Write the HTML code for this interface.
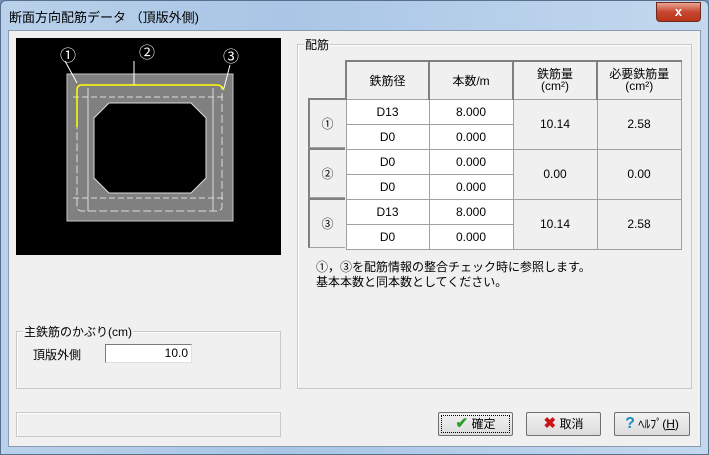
<!DOCTYPE html><html><head><meta charset="utf-8"><style>
*{margin:0;padding:0;box-sizing:border-box}
body{width:709px;height:455px;overflow:hidden;font-family:"Liberation Sans","Noto Sans CJK JP",sans-serif;font-size:12px;color:#000;background:#6d8fb8}
.win{position:absolute;left:0;top:0;width:709px;height:455px;border-radius:6px 6px 0 0;background:linear-gradient(90deg,#b9d1ea 0%,#a9c6e6 40%,#c3d8ee 100%);border:1px solid #5a6f8c}
.title{position:absolute;left:8px;top:6px;font-size:13px}
.close{position:absolute;left:655px;top:1px;width:45px;height:20px;border-radius:0 0 4px 4px;background:linear-gradient(#e8a493,#c7462f 50%,#b93519);border:1px solid #6e2a1e;color:#fff;font-weight:bold;text-align:center;line-height:18px;font-size:13px}
.client{position:absolute;left:8px;top:30px;width:693px;height:417px;background:#f0f0f0;border:1px solid #8a9bb0}
.abs{position:absolute}
.grp{position:absolute;border:1px solid #c8c8c8;box-shadow:1px 1px 0 #fff inset}
.lg{position:absolute;background:#f0f0f0;padding:0 1px;top:-9px;left:6px}
table{border-collapse:collapse;position:absolute;left:345px;top:60px}
td{border:1px solid #a0a0a0;text-align:center;font-size:12px}
.hd{background:#f0f0f0;border-left:2px solid #808080;border-top:2px solid #808080}
.btn{position:absolute;height:24px;border:1px solid #707070;border-radius:2px;background:linear-gradient(#f2f2f2,#dcdcdc);text-align:center;line-height:22px;font-size:12px}
</style></head><body><div class="win">
<div class="title">断面方向配筋データ （頂版外側)</div>
<div class="close">x</div>
</div>
<div class="client"></div>
<div class="abs" style="left:16px;top:38px;width:265px;height:217px;background:#000"></div>
<svg class="abs" style="left:16px;top:38px" width="265" height="217">
<rect x="51" y="36" width="166" height="147" fill="#808080" stroke="#c8c8c8"/>
<polygon points="93,65 175,65 190,80 190,140 175,155 93,155 78,140 78,80" fill="#000" stroke="#ddd"/>
<path d="M61,52 Q61,47 66,47 H201 Q206,47 206,52 V168 Q206,173 201,173 H66 Q61,173 61,168 Z" fill="none" stroke="#ddd" stroke-dasharray="8,3"/>
<line x1="57" y1="59" x2="210" y2="59" stroke="#ddd" stroke-dasharray="6,3"/>
<line x1="57" y1="160" x2="210" y2="160" stroke="#ddd" stroke-dasharray="6,3"/>
<line x1="72" y1="50" x2="72" y2="173" stroke="#ddd"/>
<line x1="197" y1="50" x2="197" y2="173" stroke="#ddd"/>
<path d="M61,89 V52 Q61,47 66,47 H201 Q206,47 208,52" fill="none" stroke="#ff0" stroke-width="1.5"/>
<line x1="61" y1="45" x2="49" y2="23" stroke="#fff"/><line x1="118" y1="47" x2="118" y2="23" stroke="#fff"/><line x1="208" y1="50" x2="214" y2="27" stroke="#fff"/>
<text x="44" y="23" fill="#fff" font-size="16">①</text><text x="123" y="20" fill="#fff" font-size="16">②</text><text x="207" y="24" fill="#fff" font-size="16">③</text>
</svg>
<div class="grp" style="left:297px;top:44px;width:395px;height:345px"><span class="lg">配筋</span></div>
<table>
<tr style="height:38px"><td class="hd" style="width:83px">鉄筋径</td><td class="hd" style="width:84px">本数/m</td><td class="hd" style="width:84px;line-height:12px">鉄筋量<br>(cm²)</td><td class="hd" style="width:84px;line-height:12px">必要鉄筋量<br>(cm²)</td></tr>
<tr style="height:25px"><td style="background:#fff">D13</td><td style="background:#fff">8.000</td><td rowspan="2">10.14</td><td rowspan="2">2.58</td></tr>
<tr style="height:25px"><td style="background:#fff">D0</td><td style="background:#fff">0.000</td></tr>
<tr style="height:25px"><td style="background:#fff">D0</td><td style="background:#fff">0.000</td><td rowspan="2">0.00</td><td rowspan="2">0.00</td></tr>
<tr style="height:25px"><td style="background:#fff">D0</td><td style="background:#fff">0.000</td></tr>
<tr style="height:25px"><td style="background:#fff">D13</td><td style="background:#fff">8.000</td><td rowspan="2">10.14</td><td rowspan="2">2.58</td></tr>
<tr style="height:25px"><td style="background:#fff">D0</td><td style="background:#fff">0.000</td></tr>
</table>
<div class="abs" style="left:308px;top:98px;width:37px;height:50px;border-left:2px solid #808080;border-top:2px solid #808080;border-bottom:1px solid #a0a0a0;text-align:center;line-height:48px">①</div>
<div class="abs" style="left:308px;top:148px;width:37px;height:50px;border-left:2px solid #808080;border-top:2px solid #808080;border-bottom:1px solid #a0a0a0;text-align:center;line-height:48px">②</div>
<div class="abs" style="left:308px;top:198px;width:37px;height:50px;border-left:2px solid #808080;border-top:2px solid #808080;border-bottom:1px solid #a0a0a0;text-align:center;line-height:48px">③</div>
<div class="abs" style="left:316px;top:260px;line-height:15px">①，③を配筋情報の整合チェック時に参照します。<br>基本本数と同本数としてください。</div>
<div class="grp" style="left:16px;top:331px;width:265px;height:58px"><span class="lg">主鉄筋のかぶり(cm)</span></div>
<div class="abs" style="left:33px;top:346px">頂版外側</div>
<div class="abs" style="left:105px;top:344px;width:87px;height:19px;background:#fff;border:1px solid #7a7a7a;border-right-color:#e0e0e0;border-bottom-color:#e0e0e0;text-align:right;padding-right:3px;line-height:17px">10.0</div>
<div class="grp" style="left:16px;top:412px;width:265px;height:25px"></div>
<div class="btn" style="left:438px;top:412px;width:75px;outline:1px dotted #000;outline-offset:-4px"><span style="color:#2a9d2a;font-weight:bold;font-size:15px">✔</span> 確定</div>
<div class="btn" style="left:526px;top:412px;width:75px"><span style="color:#c81414;font-weight:bold;font-size:15px">✖</span> 取消</div>
<div class="btn" style="left:614px;top:412px;width:76px"><span style="color:#1a8bc0;font-weight:bold;font-size:16px">?</span> ﾍﾙﾌﾟ(<u>H</u>)</div>
</body></html>
